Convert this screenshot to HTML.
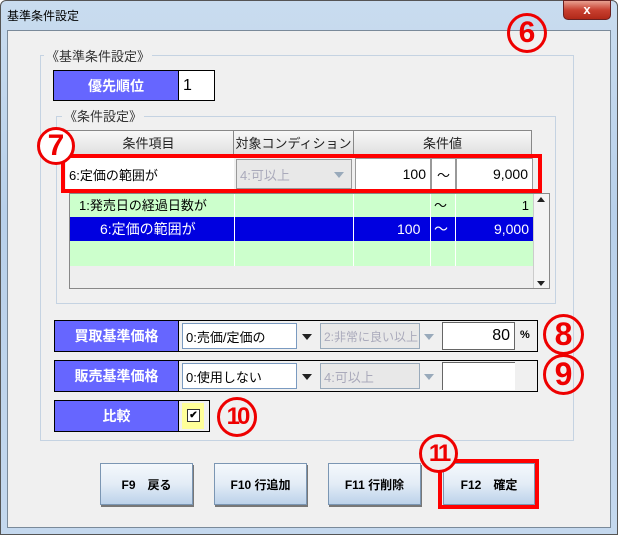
<!DOCTYPE html>
<html><head><meta charset="utf-8"><style>
*{box-sizing:border-box;margin:0;padding:0}
body{width:618px;height:535px;overflow:hidden;background:#fff;font-family:"Liberation Sans","Noto Sans CJK JP",sans-serif;position:relative}
.a{position:absolute}
.win{left:0;top:0;width:618px;height:535px;background:linear-gradient(#c9dcef,#b8d0ea 40%,#c4d8ee);border:1px solid #555;border-radius:6px 6px 0 0}
.content{left:7px;top:30px;width:604px;height:498px;background:#f0f0f0;border:1px solid #7a8a9a}
.grp{border:1px solid #c5d3e2}
.lbl{background:#6666ff;color:#fff;font-weight:bold;font-size:14px;display:flex;align-items:center;justify-content:center;border:1px solid #000}
.cell{background:#fff;border:1px solid #999;font-size:13px;display:flex;align-items:center}
.hdr{background:linear-gradient(#f8f8f8,#e0e0e0);border:1px solid #888;font-size:13px;display:flex;align-items:center;justify-content:center;color:#222}
.circ{color:#e00;font-weight:bold;border:3px solid #e00;border-radius:50%;display:flex;align-items:center;justify-content:center;background:transparent}
.btn{background:linear-gradient(#f4f8fc,#e3ecf6 50%,#bcd2ea);border:1px solid #7b96b3;font-size:12px;font-weight:bold;display:flex;align-items:center;justify-content:center;box-shadow:1px 2px 0 #777}
.arr{width:0;height:0;border-left:5px solid transparent;border-right:5px solid transparent;border-top:6px solid #222}
</style></head><body>
<div class="a win"></div>
<div class="a" style="left:7px;top:7px;font-size:12px;color:#000">基準条件設定</div>
<div class="a" style="left:563px;top:0;width:48px;height:20px;background:linear-gradient(#e8a090,#c84030 50%,#b02818);border:1px solid #6a2020;border-radius:0 0 5px 5px;color:#fff;font-weight:bold;font-size:13px;text-align:center;line-height:18px">x</div>
<div class="a content"></div>

<div class="a grp" style="left:40px;top:55px;width:534px;height:386px"></div>
<div class="a" style="left:44px;top:46px;background:#f0f0f0;font-size:13px;color:#333;padding:0 2px">《基準条件設定》</div>
<div class="a circ" style="left:507px;top:13px;width:40px;height:40px;font-size:30px">6</div>

<div class="a lbl" style="left:53px;top:70px;width:126px;height:31px">優先順位</div>
<div class="a cell" style="left:178px;top:70px;width:37px;height:31px;border:1px solid #000;padding-left:4px;font-size:16px">1</div>

<div class="a grp" style="left:56px;top:116px;width:500px;height:188px"></div>
<div class="a" style="left:62px;top:106px;background:#f0f0f0;font-size:13px;color:#333;padding:0 2px">《条件設定》</div>

<div class="a hdr" style="left:63px;top:130px;width:171px;height:25px">条件項目</div>
<div class="a hdr" style="left:233px;top:130px;width:121px;height:25px">対象コンディション</div>
<div class="a hdr" style="left:353px;top:130px;width:179px;height:25px">条件値</div>

<div class="a cell" style="left:66px;top:158px;width:168px;height:32px;padding-left:3px;border:none">6:定価の範囲が</div>
<div class="a cell" style="left:236px;top:159px;width:116px;height:30px;background:#e8e8e8;color:#aab;padding-left:3px">4:可以上</div>
<div class="a" style="left:334px;top:172px;border-left:5px solid transparent;border-right:5px solid transparent;border-top:6px solid #9ab"></div>
<div class="a cell" style="left:355px;top:158px;width:76px;height:32px;justify-content:flex-end;padding-right:4px;font-size:14px">100</div>
<div class="a cell" style="left:431px;top:158px;width:25px;height:32px;justify-content:center">～</div>
<div class="a cell" style="left:456px;top:158px;width:77px;height:32px;justify-content:flex-end;padding-right:4px;font-size:14px">9,000</div>
<div class="a" style="left:61px;top:154px;width:481px;height:39px;border:4px solid #f00"></div>
<div class="a circ" style="left:37px;top:127px;width:38px;height:38px;font-size:30px;background:#fff">7</div>

<div class="a" style="left:69px;top:193px;width:481px;height:96px;background:#eee;border:1px solid #888"></div>
<div class="a" style="left:70px;top:194px;width:463px;height:23px;background:#ccffcc;font-size:13px;line-height:23px">
 <span class="a" style="left:9px">1:発売日の経過日数が</span><span class="a" style="left:364px">～</span><span class="a" style="right:4px">1</span></div>
<div class="a" style="left:70px;top:217px;width:463px;height:24px;background:#0000e0;color:#fff;font-size:14px;line-height:24px">
 <span class="a" style="left:30px">6:定価の範囲が</span><span class="a" style="left:327px">100</span><span class="a" style="left:364px">～</span><span class="a" style="right:4px">9,000</span></div>
<div class="a" style="left:70px;top:241px;width:463px;height:25px;background:#ccffcc"></div>
<div class="a" style="left:234px;top:194px;width:1px;height:72px;background:#fff"></div>
<div class="a" style="left:353px;top:194px;width:1px;height:72px;background:#fff"></div>
<div class="a" style="left:430px;top:194px;width:1px;height:72px;background:#fff"></div>
<div class="a" style="left:455px;top:194px;width:1px;height:72px;background:#fff"></div>
<div class="a" style="left:533px;top:194px;width:16px;height:94px;background:#f4f4f4;border-left:1px solid #ccc"></div>
<div class="a" style="left:537px;top:197px;border-left:4px solid transparent;border-right:4px solid transparent;border-bottom:5px solid #222"></div>
<div class="a" style="left:537px;top:281px;border-left:4px solid transparent;border-right:4px solid transparent;border-top:5px solid #222"></div>

<!-- 買取 -->
<div class="a" style="left:54px;top:320px;width:484px;height:32px;border:1px solid #000;background:#f0f0f0"></div>
<div class="a lbl" style="left:54px;top:320px;width:125px;height:32px">買取基準価格</div>
<div class="a cell" style="left:182px;top:323px;width:115px;height:26px;border-color:#7a9ac0;padding-left:3px">0:売価/定価の</div>
<div class="a arr" style="left:302px;top:334px"></div>
<div class="a cell" style="left:320px;top:323px;width:100px;height:26px;background:#e8e8e8;color:#aab;padding-left:3px;border-color:#9ab;white-space:nowrap;overflow:hidden;font-size:12px">2:非常に良い以上</div>
<div class="a" style="left:424px;top:334px;border-left:5px solid transparent;border-right:5px solid transparent;border-top:6px solid #9ab"></div>
<div class="a cell" style="left:442px;top:322px;width:73px;height:28px;justify-content:flex-end;padding-right:4px;font-size:16px;border-color:#666">80</div>
<div class="a" style="left:520px;top:329px;font-size:11px;font-weight:bold">%</div>
<div class="a circ" style="left:543px;top:314px;width:41px;height:41px;font-size:32px">8</div>

<!-- 販売 -->
<div class="a" style="left:54px;top:360px;width:484px;height:32px;border:1px solid #000;background:#f0f0f0"></div>
<div class="a lbl" style="left:54px;top:360px;width:125px;height:32px">販売基準価格</div>
<div class="a cell" style="left:182px;top:363px;width:115px;height:26px;border-color:#7a9ac0;padding-left:3px">0:使用しない</div>
<div class="a arr" style="left:302px;top:374px"></div>
<div class="a cell" style="left:320px;top:363px;width:100px;height:26px;background:#e8e8e8;color:#aab;padding-left:3px;border-color:#9ab">4:可以上</div>
<div class="a" style="left:424px;top:374px;border-left:5px solid transparent;border-right:5px solid transparent;border-top:6px solid #9ab"></div>
<div class="a cell" style="left:442px;top:362px;width:73px;height:28px;border-color:#666;border-right:none;border-bottom:none"></div>
<div class="a circ" style="left:543px;top:354px;width:41px;height:41px;font-size:32px">9</div>

<!-- 比較 -->
<div class="a lbl" style="left:54px;top:400px;width:125px;height:32px">比較</div>
<div class="a" style="left:178px;top:400px;width:32px;height:32px;border:1px solid #000;background:#f0f0f0"></div>
<div class="a" style="left:182px;top:403px;width:22px;height:26px;background:#ffff99"></div>
<div class="a" style="left:187px;top:409px;width:13px;height:13px;border:1px solid #333;background:#fff;font-size:10px;line-height:11px;text-align:center;font-weight:bold">✔</div>
<div class="a circ" style="left:217px;top:397px;width:40px;height:40px;font-size:24px;letter-spacing:-3px">10</div>

<!-- buttons -->
<div class="a btn" style="left:100px;top:463px;width:93px;height:42px">F9　戻る</div>
<div class="a btn" style="left:214px;top:463px;width:93px;height:42px">F10 行追加</div>
<div class="a btn" style="left:328px;top:463px;width:93px;height:42px">F11 行削除</div>
<div class="a btn" style="left:443px;top:463px;width:92px;height:42px">F12　確定</div>
<div class="a" style="left:438px;top:459px;width:101px;height:50px;border:4px solid #f00"></div>
<div class="a circ" style="left:419px;top:434px;width:39px;height:39px;font-size:24px;letter-spacing:-3px;background:#f0f0f0">11</div>
</body></html>
